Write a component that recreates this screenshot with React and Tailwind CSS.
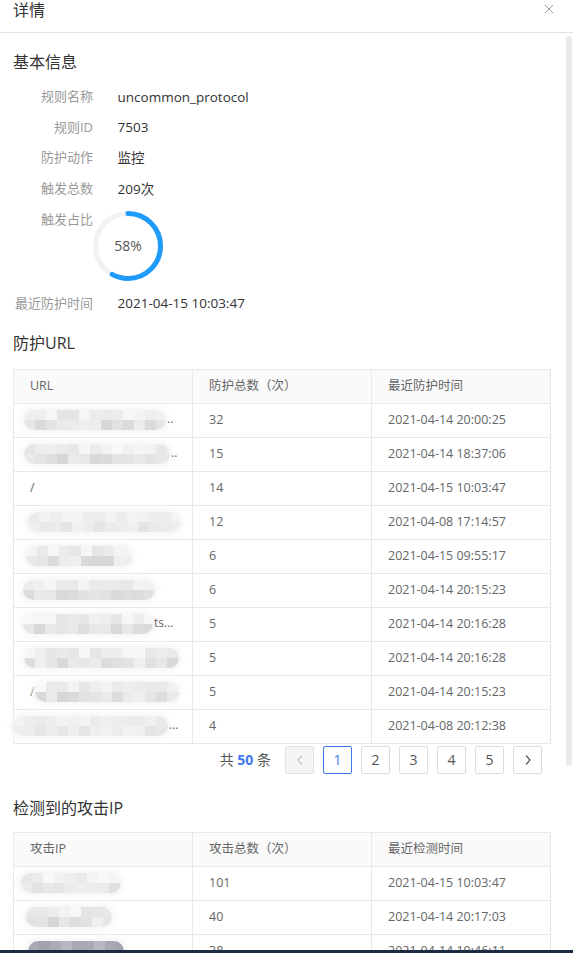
import React from "react";

const font = { fontFamily: '"Segoe UI", "Open Sans", "Noto Sans CJK SC", sans-serif' };

const info = [
  ["规则名称", "uncommon_protocol"],
  ["规则ID", "7503"],
  ["防护动作", "监控"],
  ["触发总数", "209次"],
];

const urls = [
  { blob: [23, 142], tail: "..", count: 32, time: "2021-04-14 20:00:25", seed: 1 },
  { blob: [23, 146], tail: "..", count: 15, time: "2021-04-14 18:37:06", seed: 2 },
  { text: "/", count: 14, time: "2021-04-15 10:03:47" },
  { blob: [27, 152], count: 12, time: "2021-04-08 17:14:57", seed: 3, light: true },
  { blob: [25, 106], count: 6, time: "2021-04-15 09:55:17", seed: 4 },
  { blob: [22, 132], count: 6, time: "2021-04-14 20:15:23", seed: 5 },
  { blob: [22, 130], tail: "ts...", count: 5, time: "2021-04-14 20:16:28", seed: 6 },
  { blob: [23, 155], count: 5, time: "2021-04-14 20:16:28", seed: 7 },
  { text: "/", blob: [34, 144], count: 5, time: "2021-04-14 20:15:23", seed: 8 },
  { blob: [12, 155], tail: "...", count: 4, time: "2021-04-08 20:12:38", seed: 9, light: true },
];

const ips = [
  { blob: [20, 100], count: 101, time: "2021-04-15 10:03:47", seed: 11 },
  { blob: [25, 86], count: 40, time: "2021-04-14 20:17:03", seed: 12 },
  { blob: [27, 96], count: 38, time: "2021-04-14 19:46:11", seed: 13, dark: true },
];

function rnd(seed, i) {
  const v = Math.sin(seed * 97.3 + i * 13.7) * 10000;
  return v - Math.floor(v);
}

// pixelated redaction blob
function Blob({ left, width, seed, light, dark }) {
  const cols = Math.ceil(width / 11);
  const rows = [0, 1];
  return (
    <div
      className="absolute top-1/2 -translate-y-1/2 h-[20px] rounded-full overflow-hidden flex flex-col blur-[0.6px] shadow-[0_0_5px_3px_rgba(245,245,245,0.9)]"
      style={{ left, width }}
    >
      {rows.map((r) => (
        <div key={r} className="flex h-[10px]">
          {Array.from({ length: cols }).map((_, i) => {
            const f = rnd(seed, i + r * 40);
            let g;
            if (dark) g = Math.round(160 + f * 25);
            else if (light) g = Math.round(232 + f * 14 - r * 4);
            else g = Math.round(r === 0 ? 228 + f * 20 : 214 + f * 26);
            const b = dark ? g + 12 : g;
            return <div key={i} className="w-[11px] h-full shrink-0" style={{ background: `rgb(${g},${g},${b})` }} />;
          })}
        </div>
      ))}
    </div>
  );
}

function Cell({ row }) {
  return (
    <td className="relative border border-[#e8e8e8] h-[34px] px-[16px] p-0">
      {row.text ? <span className="relative">{row.text}</span> : null}
      {row.blob ? <Blob left={row.blob[0] - 13} width={row.blob[1]} seed={row.seed} light={row.light} dark={row.dark} /> : null}
      {row.tail ? (
        <span className="absolute top-1/2 -translate-y-[55%] text-[12px] text-[#666]" style={{ left: row.blob[0] - 13 + row.blob[1] + 1 }}>
          {row.tail}
        </span>
      ) : null}
    </td>
  );
}

function DataTable({ head, rows }) {
  return (
    <table className="w-full table-fixed border-collapse text-[12.5px] text-[#666]">
      <thead>
        <tr>
          {head.map((h) => (
            <th key={h} className="bg-[#fafafa] border border-[#e8e8e8] h-[34px] px-[16px] text-left font-normal">
              {h}
            </th>
          ))}
        </tr>
      </thead>
      <tbody>
        {rows.map((r, i) => (
          <tr key={i}>
            <Cell row={r} />
            <td className="border border-[#e8e8e8] h-[34px] px-[16px]">{r.count}</td>
            <td className="border border-[#e8e8e8] h-[34px] px-[16px]">{r.time}</td>
          </tr>
        ))}
      </tbody>
    </table>
  );
}

function Ring({ pct }) {
  const r = 32.5;
  const c = 2 * Math.PI * r;
  return (
    <div className="relative w-[70px] h-[70px] mt-[6.5px]">
      <svg width="70" height="70" viewBox="0 0 70 70">
        <circle cx="35" cy="35" r={r} fill="none" stroke="#f2f2f2" strokeWidth="5" />
        <circle
          cx="35"
          cy="35"
          r={r}
          fill="none"
          stroke="#1e9bfb"
          strokeWidth="5"
          strokeLinecap="round"
          strokeDasharray={`${c * pct} ${c}`}
          transform="rotate(-90 35 35)"
        />
      </svg>
      <div className="absolute inset-0 flex items-center justify-center text-[14px] text-[#555]">{Math.round(pct * 100)}%</div>
    </div>
  );
}

function PageBtn({ children, active, disabled }) {
  const cls = active
    ? "border-[#3f7af0] text-[#3f7af0]"
    : disabled
    ? "border-[#e3e3e3] bg-[#f5f5f5] text-[#c4c4c4]"
    : "border-[#dcdcdc] text-[#555]";
  return <div className={`w-[29px] h-[28px] border rounded-[2px] flex items-center justify-center text-[14px] ${cls}`}>{children}</div>;
}

function Chevron({ dir }) {
  return (
    <svg width="8" height="12" viewBox="0 0 8 12">
      <path d={dir === "left" ? "M6 1.5 L2 6 L6 10.5" : "M2 1.5 L6 6 L2 10.5"} fill="none" stroke="currentColor" strokeWidth="1.2" />
    </svg>
  );
}

export default function App() {
  return (
    <div className="w-[573px] h-[953px] flex flex-col overflow-hidden bg-white" style={font}>
      <div className="h-[33px] shrink-0 border-b border-[#e2e2e2] flex justify-between items-start pl-[13px] pr-[19px]">
        <div className="text-[16px] leading-[20px] text-[#333]">详情</div>
        <svg className="mt-[4px]" width="10" height="10" viewBox="0 0 10 10">
          <path d="M1 1 L9 9 M9 1 L1 9" stroke="#9a9a9a" strokeWidth="1" />
        </svg>
      </div>

      <div className="relative flex-1 overflow-hidden">
        <div className="pl-[13px] pr-[22px] pt-[19px]">
          <h3 className="text-[16px] leading-[20px] text-[#333]">基本信息</h3>

          <div className="mt-[9.5px] text-[13.5px]">
            {info.map(([k, v]) => (
              <div key={k} className="flex items-center h-[30.7px]">
                <div className="w-[80px] text-right text-[13px] text-[#999]">{k}</div>
                <div className="ml-[24.5px] text-[#333]">{v}</div>
              </div>
            ))}
            <div className="flex items-start">
              <div className="w-[80px] h-[30.7px] flex items-center justify-end text-[13px] text-[#999]">触发占比</div>
              <Ring pct={0.58} />
            </div>
            <div className="flex items-center h-[30.7px] mt-[7.5px]">
              <div className="w-[80px] text-right text-[13px] text-[#999]">最近防护时间</div>
              <div className="ml-[24.5px] text-[#333]">2021-04-15 10:03:47</div>
            </div>
          </div>

          <h3 className="mt-[14px] text-[16px] leading-[20px] text-[#333]">防护URL</h3>
          <div className="mt-[16px]">
            <DataTable head={["URL", "防护总数（次）", "最近防护时间"]} rows={urls} />
          </div>

          <div className="mt-[2px] flex justify-end items-center gap-[9px] pr-[9px]">
            <div className="mr-[5px] text-[14px] text-[#555]">
              共 <span className="font-bold text-[#3f7af0]">50</span> 条
            </div>
            <PageBtn disabled>
              <Chevron dir="left" />
            </PageBtn>
            <PageBtn active>1</PageBtn>
            <PageBtn>2</PageBtn>
            <PageBtn>3</PageBtn>
            <PageBtn>4</PageBtn>
            <PageBtn>5</PageBtn>
            <PageBtn>
              <Chevron dir="right" />
            </PageBtn>
          </div>

          <h3 className="mt-[24px] text-[16px] leading-[20px] text-[#333]">检测到的攻击IP</h3>
          <div className="mt-[14px]">
            <DataTable head={["攻击IP", "攻击总数（次）", "最近检测时间"]} rows={ips} />
          </div>
        </div>

        <div className="absolute right-[1px] top-[3px] w-[6px] h-[730px] rounded-full bg-[#ebebeb]" />
      </div>

      <div className="h-[3px] shrink-0 bg-[#1d2a42]" />
    </div>
  );
}
